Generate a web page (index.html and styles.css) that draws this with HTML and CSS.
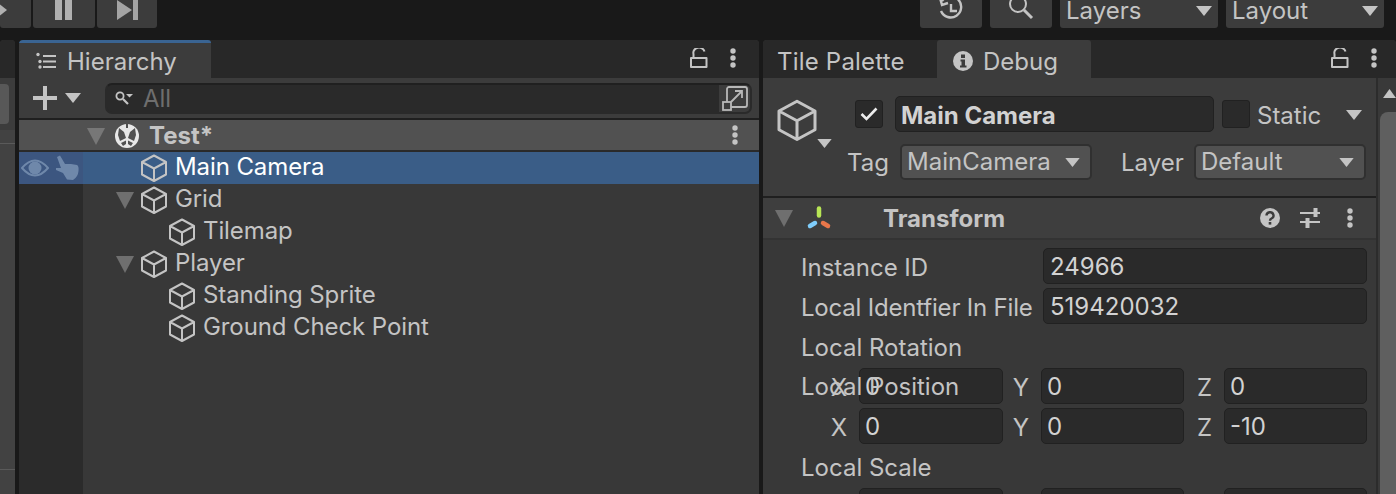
FILE: index.html
```html
<!DOCTYPE html>
<html lang="en">
<head>
    <meta charset="UTF-8">
    <meta name="viewport" content="width=device-width, initial-scale=1.0">
    <title>Unity Editor</title>
    <link rel="stylesheet" href="styles.css">
</head>
<body>
    <svg class="sprite" width="0" height="0">
        <symbol id="cube" viewBox="0 0 26 28">
            <path d="M13 1.5 L25 8 V20.5 L13 27 L1 20.5 V8 Z M1 8 L13 14.5 L25 8 M13 14.5 V27" fill="none" stroke="currentColor" stroke-width="2" stroke-linejoin="round"/>
        </symbol>
        <symbol id="lock" viewBox="0 0 18 20">
            <path d="M3.500 9 V6 A5.500 5 0 0 1 14.500 3.500 M1 10 H16.500 V19 H1 Z" fill="none" stroke="currentColor" stroke-width="2" stroke-linejoin="round"/>
        </symbol>
        <symbol id="dots" viewBox="0 0 6 20">
            <circle cx="3" cy="3" r="2.7" fill="currentColor"/>
            <circle cx="3" cy="10" r="2.7" fill="currentColor"/>
            <circle cx="3" cy="17" r="2.7" fill="currentColor"/>
        </symbol>
        <symbol id="down" viewBox="0 0 16 10">
            <path d="M0 0 H16 L8 10 Z" fill="currentColor"/>
        </symbol>
        <symbol id="fold" viewBox="0 0 18 17">
            <path d="M0 0 H18 L9 17 Z" fill="currentColor"/>
        </symbol>
    </svg>

    <div class="app">
        <div class="toolbar">
            <div class="tool-group">
                <div class="tool play">
                    <svg width="10" height="16" viewBox="0 0 10 16"><path d="M0 0 L10 8 L0 16 Z" fill="#b0b0b0"/></svg>
                </div>
                <div class="tool">
                    <svg width="18" height="20" viewBox="0 0 18 20"><path d="M0 0 H7 V20 H0 Z M10 0 H17 V20 H10 Z" fill="#b0b0b0"/></svg>
                </div>
                <div class="tool step">
                    <svg width="21" height="20" viewBox="0 0 21 20"><path d="M0 0 L15 10 L0 20 Z M16 0 H21 V20 H16 Z" fill="#a4a4a4"/></svg>
                </div>
            </div>
            <div class="tool-group right">
                <div class="tool">
                    <svg width="26" height="24" viewBox="0 0 26 24"><path d="M4 3 A10.5 10.5 0 1 1 3 13 M2 0 L4 7 L10 5 M13 6 V13 H19" fill="none" stroke="#c4c4c4" stroke-width="2.4"/></svg>
                </div>
                <div class="tool">
                    <svg width="26" height="24" viewBox="0 0 26 24"><circle cx="10" cy="6" r="8" fill="none" stroke="#c4c4c4" stroke-width="2"/><path d="M16 12 L24 20" stroke="#c4c4c4" stroke-width="3"/></svg>
                </div>
                <div class="tool menu"><span>Layers</span><svg class="arrow-icon"><use href="#down"/></svg></div>
                <div class="tool menu"><span>Layout</span><svg class="arrow-icon"><use href="#down"/></svg></div>
            </div>
        </div>

        <div class="panes">
            <div class="pane side-pane">
                <div class="tab-strip"></div>
                <div class="side-tools"><div class="side-button"></div></div>
                <div class="side-view"></div>
            </div>

            <div class="pane hierarchy">
                <div class="tab-strip">
                    <div class="tab focused">
                        <svg width="22" height="18" viewBox="0 0 22 18">
                            <path d="M8 4 H21 M8 9.5 H21 M8 15 H21" stroke="#c4c4c4" stroke-width="2"/>
                            <circle cx="3" cy="2.5" r="1.7" fill="#c4c4c4"/><circle cx="5" cy="9.5" r="1.7" fill="#c4c4c4"/><circle cx="5" cy="15" r="1.7" fill="#c4c4c4"/>
                        </svg>
                        <span>Hierarchy</span>
                    </div>
                    <div class="tab-actions">
                        <svg class="lock-icon"><use href="#lock"/></svg>
                        <svg class="dots-icon"><use href="#dots"/></svg>
                    </div>
                </div>
                <div class="search-bar">
                    <div class="add-menu">
                        <svg width="24" height="24" viewBox="0 0 24 24"><path d="M10 0 H14 V10 H24 V14 H14 V24 H10 V14 H0 V10 H10 Z" fill="#c4c4c4"/></svg>
                        <svg class="arrow-icon"><use href="#down"/></svg>
                    </div>
                    <div class="search-field">
                        <div class="search-input">
                            <svg width="18" height="14" viewBox="0 0 18 14"><circle cx="5" cy="5" r="3.6" fill="none" stroke="#c4c4c4" stroke-width="1.8"/><path d="M8 8 L13 13" stroke="#c4c4c4" stroke-width="2.2"/><path d="M11 3 H18 L14.500 6.500 Z" fill="#c4c4c4"/></svg>
                            <span>All</span>
                        </div>
                        <div class="search-button">
                            <svg width="26" height="26" viewBox="0 0 26 26">
                                <rect x="5" y="2" width="20" height="20" rx="2" fill="none" stroke="#b8b8b8" stroke-width="1.800"/>
                                <path d="M9 17 L20 6 M13 6 H20 V13" fill="none" stroke="#b8b8b8" stroke-width="1.800"/>
                                <rect x="1" y="17" width="8" height="8" fill="#3c3c3c" stroke="#b8b8b8" stroke-width="1.800"/>
                            </svg>
                        </div>
                    </div>
                </div>
                <div class="scene-row">
                    <svg class="tree-arrow"><use href="#fold"/></svg>
                    <svg class="scene-icon" width="24" height="26" viewBox="0 0 24 26">
                        <circle cx="12" cy="13" r="12" fill="#e8e8e8"/>
                        <path d="M12 0 V5" stroke="#515151" stroke-width="2"/>
                        <path d="M4 5 L9 9 L11 15 L5 18 L3 12 Z M20 5 L15 9 L13 15 L19 18 L21 12 Z" fill="#515151"/>
                        <path d="M6 20 L11 17.500 V21 L8 23 Z M18 20 L13 17.500 V21 L16 23 Z" fill="#515151"/>
                    </svg>
                    <span class="scene-name">Test*</span>
                    <svg class="dots-icon scene-dots"><use href="#dots"/></svg>
                </div>
                <div class="tree">
                    <div class="tree-row selected">
                        <div class="gutter">
                            <svg width="28" height="18" viewBox="0 0 28 18"><path d="M1 9 Q14 -6 27 9 Q14 24 1 9 Z" fill="none" stroke="#6f88aa" stroke-width="2"/><circle cx="14" cy="9" r="6.500" fill="#6f88aa"/></svg>
                            <svg width="24" height="26" viewBox="0 0 24 26"><path d="M2 2 L5 0.500 L10 9 L16 9 L22 10 Q24 11 23.500 16 Q23 22 18 25 L12 24.500 L8 18 L1 15 L1 13 L6 13 Z" fill="#6f88aa"/></svg>
                        </div>
                        <div class="node depth-1">
                            <span class="arrow-space"></span>
                            <svg class="cube-icon"><use href="#cube"/></svg>
                            <span class="node-name">Main Camera</span>
                        </div>
                    </div>
                    <div class="tree-row">
                        <div class="gutter"></div>
                        <div class="node depth-1">
                            <svg class="tree-arrow"><use href="#fold"/></svg>
                            <svg class="cube-icon"><use href="#cube"/></svg>
                            <span class="node-name">Grid</span>
                        </div>
                    </div>
                    <div class="tree-row">
                        <div class="gutter"></div>
                        <div class="node depth-2">
                            <span class="arrow-space"></span>
                            <svg class="cube-icon"><use href="#cube"/></svg>
                            <span class="node-name">Tilemap</span>
                        </div>
                    </div>
                    <div class="tree-row">
                        <div class="gutter"></div>
                        <div class="node depth-1">
                            <svg class="tree-arrow"><use href="#fold"/></svg>
                            <svg class="cube-icon"><use href="#cube"/></svg>
                            <span class="node-name">Player</span>
                        </div>
                    </div>
                    <div class="tree-row">
                        <div class="gutter"></div>
                        <div class="node depth-2">
                            <span class="arrow-space"></span>
                            <svg class="cube-icon"><use href="#cube"/></svg>
                            <span class="node-name">Standing Sprite</span>
                        </div>
                    </div>
                    <div class="tree-row">
                        <div class="gutter"></div>
                        <div class="node depth-2">
                            <span class="arrow-space"></span>
                            <svg class="cube-icon"><use href="#cube"/></svg>
                            <span class="node-name">Ground Check Point</span>
                        </div>
                    </div>
                    <div class="tree-fill"><div class="gutter"></div></div>
                </div>
            </div>

            <div class="pane inspector">
                <div class="tab-strip">
                    <div class="tab plain"><span>Tile Palette</span></div>
                    <div class="tab debug">
                        <svg width="20" height="20" viewBox="0 0 20 20"><circle cx="10" cy="10" r="10" fill="#c4c4c4"/><path d="M8 3.500 H12 V7 H8 Z M7.500 8.500 H12 V14.500 H13.500 V16.500 H7 V14.500 H8.500 V10.500 H7.500 Z" fill="#3c3c3c"/></svg>
                        <span>Debug</span>
                    </div>
                    <div class="tab-actions">
                        <svg class="lock-icon"><use href="#lock"/></svg>
                        <svg class="dots-icon"><use href="#dots"/></svg>
                    </div>
                </div>
                <div class="inspector-body">
                    <div class="inspector-main">
                        <div class="object-header">
                            <div class="object-icon">
                                <svg class="big-cube"><use href="#cube"/></svg>
                                <svg class="object-arrow"><use href="#down"/></svg>
                            </div>
                            <div class="object-fields">
                                <div class="name-row">
                                    <div class="checkbox">
                                        <svg width="18" height="14" viewBox="0 0 18 14"><path d="M1.500 7 L6.500 12 L16.500 1.500" fill="none" stroke="#ececec" stroke-width="2.600"/></svg>
                                    </div>
                                    <div class="name-field">Main Camera</div>
                                    <div class="checkbox static-box"></div>
                                    <span class="static-label">Static</span>
                                    <svg class="arrow-icon"><use href="#down"/></svg>
                                </div>
                                <div class="tag-row">
                                    <span class="tag-label">Tag</span>
                                    <div class="dropdown tag-drop"><span>MainCamera</span><svg class="arrow-icon"><use href="#down"/></svg></div>
                                    <span class="layer-label">Layer</span>
                                    <div class="dropdown layer-drop"><span>Default</span><svg class="arrow-icon"><use href="#down"/></svg></div>
                                </div>
                            </div>
                        </div>
                        <div class="component-header">
                            <svg class="tree-arrow"><use href="#fold"/></svg>
                            <svg class="transform-icon" width="26" height="24" viewBox="0 0 26 24">
                                <path d="M13 2.500 V9.500" stroke="#b8e655" stroke-width="4.500" stroke-linecap="round"/>
                                <path d="M9 17 L4 20" stroke="#7fcdfb" stroke-width="4.500" stroke-linecap="round"/>
                                <path d="M17 17 L22 20" stroke="#e8764a" stroke-width="4.500" stroke-linecap="round"/>
                            </svg>
                            <span class="component-name">Transform</span>
                            <div class="component-actions">
                                <svg width="20" height="20" viewBox="0 0 20 20"><circle cx="10" cy="10" r="10" fill="#c4c4c4"/><path d="M6.500 7.500 A3.500 3.300 0 1 1 11.500 10.500 Q10 11.200 10 12.800" fill="none" stroke="#3c3c3c" stroke-width="2.400"/><rect x="8.700" y="14" width="2.600" height="2.600" fill="#3c3c3c"/></svg>
                                <svg width="20" height="20" viewBox="0 0 20 20"><path d="M0 5 H20 M0 14 H20" stroke="#c4c4c4" stroke-width="2"/><path d="M15.500 0 V9 M7.500 10 V20" stroke="#c4c4c4" stroke-width="4"/></svg>
                                <svg class="dots-icon"><use href="#dots"/></svg>
                            </div>
                        </div>
                        <div class="properties">
                            <div class="prop-row">
                                <span class="prop-label">Instance ID</span>
                                <div class="field">24966</div>
                            </div>
                            <div class="prop-row">
                                <span class="prop-label tight">Local Identfier In File</span>
                                <div class="field">519420032</div>
                            </div>
                            <div class="prop-heading">Local Rotation</div>
                            <div class="vector-row">
                                <span class="prop-label overlap-label">Local Position</span>
                                <span class="axis">X</span><div class="field">0</div>
                                <span class="axis">Y</span><div class="field">0</div>
                                <span class="axis">Z</span><div class="field">0</div>
                            </div>
                            <div class="vector-row">
                                <span class="axis">X</span><div class="field">0</div>
                                <span class="axis">Y</span><div class="field">0</div>
                                <span class="axis">Z</span><div class="field">-10</div>
                            </div>
                            <div class="prop-heading">Local Scale</div>
                            <div class="vector-row">
                                <span class="axis"></span><div class="field"></div>
                                <span class="axis"></span><div class="field"></div>
                                <span class="axis"></span><div class="field"></div>
                            </div>
                        </div>
                    </div>
                    <div class="scrollbar">
                        <svg class="scroll-arrow" width="13" height="9" viewBox="0 0 13 9"><path d="M6.500 0 L13 9 H0 Z" fill="#c4c4c4"/></svg>
                        <div class="scroll-thumb"></div>
                    </div>
                </div>
            </div>
        </div>
    </div>
</body>
</html>
```
FILE: styles.css
```css
* {
    box-sizing: border-box;
}
html,
body {
    margin: 0;
    height: 494px;
    overflow: hidden;
    background-color: #191919;
}
body {
    font-family: Inter, "Liberation Sans", sans-serif;
    font-size: 24px;
    color: #c4c4c4;
}
.sprite {
    display: block;
    position: absolute;
}
.app {
    display: flex;
    flex-direction: column;
    height: 494px;
}

/* top bar */
.toolbar {
    display: flex;
    justify-content: space-between;
    height: 40px;
    flex-shrink: 0;
    padding-right: 12px;
}
.tool-group {
    display: flex;
    gap: 2px;
    height: 28px;
}
.tool-group.right {
    gap: 8px;
}
.tool {
    display: flex;
    align-items: center;
    justify-content: center;
    width: 62px;
    height: 28px;
    padding-bottom: 8px;
    background-color: #3c3c3c;
    border-radius: 0 0 3px 3px;
    overflow: hidden;
}
.tool.play {
    width: 31px;
    justify-content: flex-start;
}
.tool.play svg {
    margin-left: -3px;
}
.tool.step {
    width: 60px;
}
.tool.menu {
    justify-content: space-between;
    width: 158px;
    padding: 0 6px 6px;
    line-height: 22px;
}
.arrow-icon {
    width: 16px;
    height: 10px;
    flex-shrink: 0;
    color: #c4c4c4;
}

/* panes */
.panes {
    display: flex;
    gap: 4px;
    flex: 1;
    min-height: 0;
}
.pane {
    display: flex;
    flex-direction: column;
    background-color: #383838;
    border-radius: 4px 4px 0 0;
    overflow: hidden;
}
.side-pane {
    width: 15px;
}
.hierarchy {
    width: 740px;
}
.inspector {
    flex: 1;
    min-width: 0;
}
.tab-strip {
    display: flex;
    height: 38px;
    flex-shrink: 0;
    background-color: #282828;
}
.tab {
    display: flex;
    align-items: center;
    height: 38px;
    background-color: #3c3c3c;
}
.tab.focused {
    gap: 10px;
    width: 192px;
    padding: 1px 0 0 16px;
    border-top: 3px solid #3a6492;
    border-radius: 3px 3px 0 0;
}
.tab.plain {
    width: 174px;
    padding: 4px 0 0 14px;
    letter-spacing: 0.2px;
    background-color: transparent;
}
.tab.debug {
    gap: 10px;
    width: 154px;
    padding: 4px 0 0 16px;
    border-radius: 3px 3px 0 0;
}
.tab-actions {
    display: flex;
    align-items: center;
    gap: 22px;
    margin-left: auto;
    padding: 0 23px 2px 0;
}
.inspector .tab-actions {
    padding-right: 19px;
}
.lock-icon {
    width: 18px;
    height: 20px;
    color: #c4c4c4;
}
.dots-icon {
    width: 6px;
    height: 20px;
    color: #c4c4c4;
}

/* left sliver */
.side-tools {
    height: 52px;
    padding-top: 6px;
    background-color: #3c3c3c;
}
.side-button {
    width: 9px;
    height: 40px;
    background-color: #585858;
    border-radius: 0 4px 4px 0;
}
.side-view {
    flex: 1;
    background:
        linear-gradient(#5a5a5a, #5a5a5a) 0 13px / 100% 1px no-repeat,
        linear-gradient(#5a5a5a, #5a5a5a) 0 339px / 100% 1px no-repeat,
        #424242;
}

/* hierarchy */
.search-bar {
    display: flex;
    align-items: center;
    height: 42px;
    flex-shrink: 0;
    padding: 0 7px 0 14px;
    background-color: #3c3c3c;
    border-bottom: 2px solid #1f1f1f;
}
.add-menu {
    display: flex;
    align-items: center;
    gap: 8px;
    width: 72px;
    color: #c4c4c4;
}
.search-field {
    display: flex;
    flex: 1;
    height: 31px;
    background-color: #2a2a2a;
    border: 2px solid #2a2a2a;
    border-top-color: #202020;
    border-radius: 7px;
    overflow: hidden;
}
.search-input {
    display: flex;
    align-items: center;
    gap: 10px;
    flex: 1;
    padding-left: 8px;
    color: #6e6e6e;
}
.search-button {
    display: flex;
    align-items: center;
    justify-content: center;
    width: 31px;
    background-color: #3c3c3c;
}
.scene-row {
    display: flex;
    align-items: center;
    height: 32px;
    flex-shrink: 0;
    padding: 0 21px 0 68px;
    background-color: #515151;
    border-bottom: 2px solid #2a2a2a;
}
.tree-arrow {
    width: 18px;
    height: 17px;
    flex-shrink: 0;
    color: #6f6f6f;
}
.scene-row .tree-arrow {
    margin: 2px 10px 0 0;
    color: #777777;
}
.scene-icon {
    margin-top: 2px;
}
.scene-name {
    margin-left: 10px;
    font-weight: 700;
}
.scene-dots {
    margin-left: auto;
}
.tree {
    display: flex;
    flex-direction: column;
    flex: 1;
}
.tree-row {
    display: flex;
    height: 32px;
    flex-shrink: 0;
}
.tree-row.selected {
    background-color: #3a5d87;
    color: #ffffff;
}
.gutter {
    display: flex;
    align-items: center;
    gap: 6px;
    width: 64px;
    height: 100%;
    padding-left: 2px;
    background-color: #2b2b2b;
}
.selected .gutter {
    background-color: #3c5680;
}
.tree-fill {
    flex: 1;
}
.node {
    display: flex;
    align-items: center;
    flex: 1;
}
.node.depth-1 {
    padding-left: 33px;
}
.node.depth-2 {
    padding-left: 61px;
}
.node .tree-arrow,
.arrow-space {
    width: 18px;
    margin-right: 7px;
}
.node-name {
    margin-bottom: 4px;
    letter-spacing: -0.1px;
}
.cube-icon {
    width: 26px;
    height: 28px;
    flex-shrink: 0;
    margin-right: 8px;
    color: #c4c4c4;
}

/* inspector */
.inspector-body {
    display: flex;
    flex: 1;
    min-height: 0;
}
.inspector-main {
    flex: 1;
    min-width: 0;
}
.scrollbar {
    display: flex;
    flex-direction: column;
    align-items: flex-end;
    flex-shrink: 0;
    width: 20px;
    padding-top: 11px;
    background-color: #393939;
    border-left: 2px solid #2c2c2c;
    overflow: hidden;
}
.scroll-arrow {
    flex-shrink: 0;
}
.scroll-thumb {
    width: 16px;
    height: 400px;
    flex-shrink: 0;
    margin-top: 14px;
    background-color: #5f5f5f;
    border-radius: 8px 0 0 8px;
}
.object-header {
    display: flex;
    height: 120px;
    background-color: #3c3c3c;
    border-bottom: 2px solid #1f1f1f;
}
.object-icon {
    display: flex;
    flex-shrink: 0;
    width: 92px;
    padding: 21px 0 0 14px;
}
.big-cube {
    width: 40px;
    height: 42px;
    color: #c4c4c4;
}
.object-arrow {
    width: 15px;
    height: 9px;
    margin-top: 40px;
    color: #c4c4c4;
}
.object-fields {
    flex: 1;
    min-width: 0;
}
.name-row {
    display: flex;
    align-items: center;
    height: 36px;
    margin-top: 18px;
}
.name-row .arrow-icon {
    margin-top: 2px;
}
.checkbox {
    display: flex;
    align-items: center;
    justify-content: center;
    width: 28px;
    height: 28px;
    background-color: #2a2a2a;
    border: 1px solid #212121;
    border-radius: 3px;
    flex-shrink: 0;
}
.name-field {
    width: 319px;
    height: 36px;
    margin: 0 8px 0 12px;
    padding: 2px 0 0 5px;
    font-weight: 700;
    line-height: 34px;
    color: #d2d2d2;
    background-color: #2a2a2a;
    border: 1px solid #212121;
    border-radius: 5px;
}
.static-label {
    margin: 2px 25px 0 7px;
}
.tag-row {
    display: flex;
    align-items: center;
    height: 36px;
    margin-top: 12px;
}
.tag-label {
    width: 46px;
    margin-left: -8px;
}
.dropdown {
    display: flex;
    align-items: center;
    justify-content: space-between;
    height: 36px;
    margin-left: 7px;
    padding: 0 10px 2px 5px;
    background-color: #515151;
    border: 2px solid #303030;
    border-radius: 5px;
}
.dropdown .arrow-icon {
    width: 15px;
    height: 9px;
    margin-top: 2px;
}
.tag-drop {
    width: 192px;
}
.layer-label {
    margin-left: 29px;
    width: 66px;
}
.layer-drop {
    width: 172px;
}
.component-header {
    display: flex;
    align-items: center;
    height: 42px;
    padding: 0 23px 0 12px;
    background-color: #3e3e3e;
    border-bottom: 2px solid #333333;
}
.transform-icon {
    margin-left: 13px;
}
.component-name {
    margin-left: 51px;
    font-weight: 700;
}
.component-actions {
    display: flex;
    align-items: center;
    gap: 20px;
    margin-left: auto;
}
.component-actions .dots-icon {
    margin-left: 7px;
}
.properties {
    display: flex;
    flex-direction: column;
    gap: 4px;
    padding: 8px 9px 0 38px;
}
.prop-row {
    display: flex;
    align-items: center;
    height: 36px;
}
.prop-label {
    width: 242px;
    flex-shrink: 0;
    padding-top: 2px;
    white-space: nowrap;
}
.prop-label.tight {
    letter-spacing: -0.2px;
}
.prop-heading {
    height: 36px;
    padding-top: 2px;
    line-height: 36px;
}
.field {
    flex: 1;
    min-width: 0;
    height: 36px;
    padding: 1px 0 0 6px;
    line-height: 34px;
    color: #d2d2d2;
    background-color: #2a2a2a;
    border: 1px solid #212121;
    border-radius: 5px;
}
.vector-row {
    display: grid;
    grid-template-columns: 58px 144px 38px 143px 40px 143px;
    align-items: center;
    position: relative;
    height: 36px;
}
.vector-row .field {
    padding-left: 5px;
}
.axis {
    padding: 2px 12px 0 0;
    text-align: right;
}
.overlap-label {
    position: absolute;
    left: 0;
    top: 0;
    padding: 0;
    line-height: 38px;
}
```
